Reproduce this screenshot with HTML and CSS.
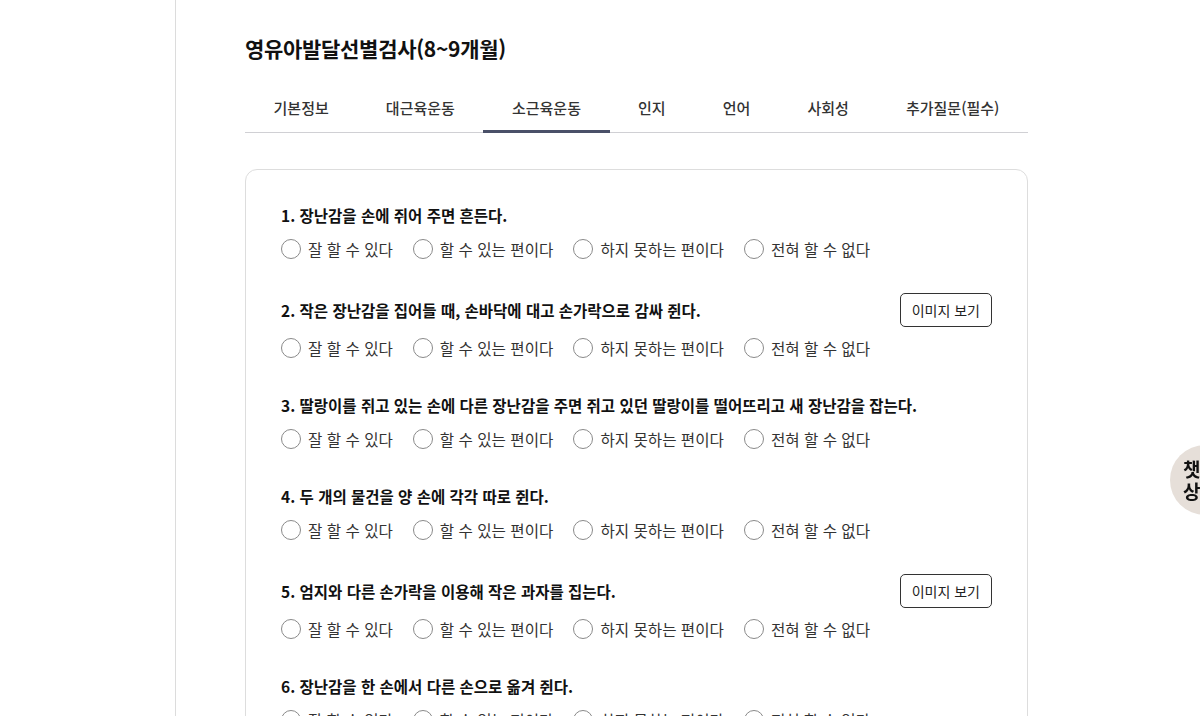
FILE: index.html
```html
<!DOCTYPE html>
<html lang="ko">
<head>
    <meta charset="UTF-8">
    <meta name="viewport" content="width=device-width, initial-scale=1.0">
    <title>영유아발달선별검사(8~9개월)</title>
    <link rel="stylesheet" href="styles.css">
</head>
<body>
    <div class="layout">
        <aside class="sidebar"></aside>

        <main class="main">
            <h1 class="page-title">영유아발달선별검사(8~9개월)</h1>

            <nav class="tabs">
                <a class="tab">기본정보</a>
                <a class="tab">대근육운동</a>
                <a class="tab active">소근육운동</a>
                <a class="tab">인지</a>
                <a class="tab">언어</a>
                <a class="tab">사회성</a>
                <a class="tab">추가질문(필수)</a>
            </nav>

            <section class="survey">
                <div class="question">
                    <div class="question-head">
                        <p class="question-title">1. 장난감을 손에 쥐어 주면 흔든다.</p>
                    </div>
                    <div class="options">
                        <label class="option"><span class="radio"></span>잘 할 수 있다</label>
                        <label class="option"><span class="radio"></span>할 수 있는 편이다</label>
                        <label class="option"><span class="radio"></span>하지 못하는 편이다</label>
                        <label class="option"><span class="radio"></span>전혀 할 수 없다</label>
                    </div>
                </div>

                <div class="question">
                    <div class="question-head">
                        <p class="question-title">2. 작은 장난감을 집어들 때, 손바닥에 대고 손가락으로 감싸 쥔다.</p>
                        <button class="image-btn">이미지 보기</button>
                    </div>
                    <div class="options">
                        <label class="option"><span class="radio"></span>잘 할 수 있다</label>
                        <label class="option"><span class="radio"></span>할 수 있는 편이다</label>
                        <label class="option"><span class="radio"></span>하지 못하는 편이다</label>
                        <label class="option"><span class="radio"></span>전혀 할 수 없다</label>
                    </div>
                </div>

                <div class="question">
                    <div class="question-head">
                        <p class="question-title">3. 딸랑이를 쥐고 있는 손에 다른 장난감을 주면 쥐고 있던 딸랑이를 떨어뜨리고 새 장난감을 잡는다.</p>
                    </div>
                    <div class="options">
                        <label class="option"><span class="radio"></span>잘 할 수 있다</label>
                        <label class="option"><span class="radio"></span>할 수 있는 편이다</label>
                        <label class="option"><span class="radio"></span>하지 못하는 편이다</label>
                        <label class="option"><span class="radio"></span>전혀 할 수 없다</label>
                    </div>
                </div>

                <div class="question">
                    <div class="question-head">
                        <p class="question-title">4. 두 개의 물건을 양 손에 각각 따로 쥔다.</p>
                    </div>
                    <div class="options">
                        <label class="option"><span class="radio"></span>잘 할 수 있다</label>
                        <label class="option"><span class="radio"></span>할 수 있는 편이다</label>
                        <label class="option"><span class="radio"></span>하지 못하는 편이다</label>
                        <label class="option"><span class="radio"></span>전혀 할 수 없다</label>
                    </div>
                </div>

                <div class="question">
                    <div class="question-head">
                        <p class="question-title">5. 엄지와 다른 손가락을 이용해 작은 과자를 집는다.</p>
                        <button class="image-btn">이미지 보기</button>
                    </div>
                    <div class="options">
                        <label class="option"><span class="radio"></span>잘 할 수 있다</label>
                        <label class="option"><span class="radio"></span>할 수 있는 편이다</label>
                        <label class="option"><span class="radio"></span>하지 못하는 편이다</label>
                        <label class="option"><span class="radio"></span>전혀 할 수 없다</label>
                    </div>
                </div>

                <div class="question">
                    <div class="question-head">
                        <p class="question-title">6. 장난감을 한 손에서 다른 손으로 옮겨 쥔다.</p>
                    </div>
                    <div class="options">
                        <label class="option"><span class="radio"></span>잘 할 수 있다</label>
                        <label class="option"><span class="radio"></span>할 수 있는 편이다</label>
                        <label class="option"><span class="radio"></span>하지 못하는 편이다</label>
                        <label class="option"><span class="radio"></span>전혀 할 수 없다</label>
                    </div>
                </div>
            </section>
        </main>
    </div>

    <!-- floating chatbot button -->
    <a class="chat-float">챗봇<br>상담</a>
</body>
</html>
```

FILE: styles.css
```css
html, body {
    margin: 0;
    padding: 0;
    background: #ffffff;
    height: 100%;
    overflow: hidden;
}

body {
    font-family: "Noto Sans CJK KR", "Noto Sans", sans-serif;
    color: #222222;
}

.layout {
    display: flex;
    min-height: 100vh;
}

.sidebar {
    width: 175px;
    flex-shrink: 0;
    border-right: 1px solid #dcdcdc;
}

.main {
    width: 783px;
    padding: 34px 0 0 69px;
}

.page-title {
    margin: 0;
    font-size: 21px;
    line-height: 28px;
    font-weight: 700;
    color: #111111;
    letter-spacing: -0.3px;
}

.tabs {
    display: flex;
    margin-top: 22px;
    border-bottom: 1px solid #d0d0d4;
}

.tab {
    flex: 1 1 auto;
    text-align: center;
    padding: 12px 0 10px;
    margin-bottom: -1px;
    font-size: 15px;
    line-height: 24px;
    font-weight: 500;
    color: #333333;
    border-bottom: 3px solid transparent;
    cursor: pointer;
    white-space: nowrap;
}

.tab.active {
    border-bottom-color: #4a5068;
}

.survey {
    margin-top: 36px;
    border: 1px solid #dddddd;
    border-radius: 12px;
    padding: 32px 35px 40px 35px;
}

.question + .question {
    margin-top: 32px;
}

.question-head {
    display: flex;
    align-items: center;
    justify-content: space-between;
    min-height: 26px;
}

.question-title {
    margin: 0;
    font-size: 15.5px;
    line-height: 26px;
    font-weight: 700;
    color: #111111;
}

.image-btn {
    font-family: inherit;
    height: 34px;
    padding: 0 11px;
    border: 1px solid #333333;
    border-radius: 5px;
    background: #ffffff;
    color: #222222;
    font-size: 14px;
    cursor: pointer;
}

.options {
    display: flex;
    gap: 20px;
    margin-top: 9px;
}

.option {
    display: flex;
    align-items: center;
    gap: 7px;
    font-size: 15.6px;
    line-height: 24px;
    color: #333333;
    cursor: pointer;
}

.radio {
    width: 18px;
    height: 18px;
    border: 1px solid #8a8a8a;
    border-radius: 50%;
    background: #ffffff;
}

.chat-float {
    position: fixed;
    top: 445px;
    right: -40px;
    width: 70px;
    height: 70px;
    border-radius: 50%;
    overflow: hidden;
    background: #e6dfd9;
    box-sizing: border-box;
    padding: 13px 0 0 13px;
    font-size: 19px;
    line-height: 22px;
    font-weight: 700;
    color: #111111;
    white-space: nowrap;
}
```
